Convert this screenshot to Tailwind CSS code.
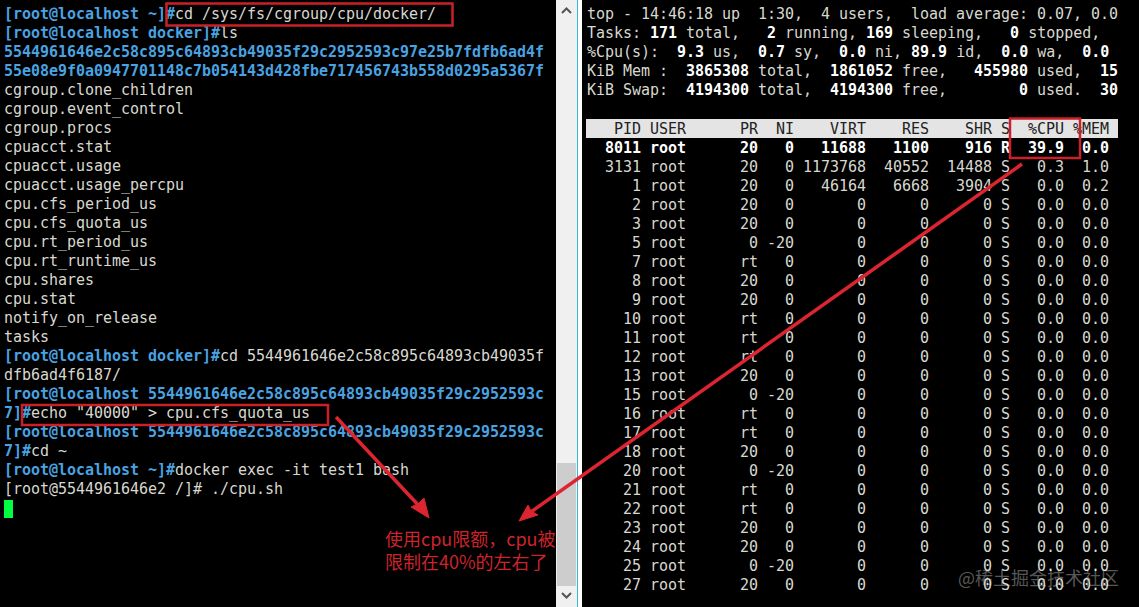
<!doctype html>
<html lang="en">
    <head>
        <meta charset="UTF-8" />
        <title>cpu quota</title>
        <script src="https://cdn.jsdelivr.net/npm/@tailwindcss/browser@4"></script>
    </head>

    <body class="bg-black">
        <div class="relative flex h-[607px] w-[1139px] overflow-hidden bg-black font-['DejaVu_Sans_Mono',monospace] text-[15px] leading-[19px] tracking-[-0.03px] text-[#d8d8d0]">
            <!-- Left terminal -->
            <div class="w-[556px] shrink-0 pl-1 pt-[5px]">
<pre class="font-['DejaVu_Sans_Mono',monospace] text-[15px] leading-[19px]"><b class="text-[#4aa3e0]">[root@localhost ~]#</b>cd /sys/fs/cgroup/cpu/docker/
<b class="text-[#4aa3e0]">[root@localhost docker]#</b>ls
<b class="text-[#4aa3e0]">5544961646e2c58c895c64893cb49035f29c2952593c97e25b7fdfb6ad4f</b>
<b class="text-[#4aa3e0]">55e08e9f0a0947701148c7b054143d428fbe717456743b558d0295a5367f</b>
cgroup.clone_children
cgroup.event_control
cgroup.procs
cpuacct.stat
cpuacct.usage
cpuacct.usage_percpu
cpu.cfs_period_us
cpu.cfs_quota_us
cpu.rt_period_us
cpu.rt_runtime_us
cpu.shares
cpu.stat
notify_on_release
tasks
<b class="text-[#4aa3e0]">[root@localhost docker]#</b>cd 5544961646e2c58c895c64893cb49035f
dfb6ad4f6187/
<b class="text-[#4aa3e0]">[root@localhost 5544961646e2c58c895c64893cb49035f29c2952593c
7]#</b>echo "40000" &gt; cpu.cfs_quota_us
<b class="text-[#4aa3e0]">[root@localhost 5544961646e2c58c895c64893cb49035f29c2952593c
7]#</b>cd ~
<b class="text-[#4aa3e0]">[root@localhost ~]#</b>docker exec -it test1 bash
[root@5544961646e2 /]# ./cpu.sh</pre>
                <div class="mt-px h-[18px] w-[9px] bg-[#00ff40]"></div>
            </div>

            <!-- Scrollbar between the panes -->
            <div class="relative flex w-[26px] shrink-0 bg-white">
                <div class="flex w-[21px] flex-col items-center bg-[#f0f0f0]">
                    <svg class="mt-[7px] h-[7px] w-[11px]" viewBox="0 0 11 7" fill="none" stroke="#555" stroke-width="2"><path d="M1 6l4.500-4.500L10 6" /></svg>
                    <div class="mt-[449px] h-[123px] w-[19px] bg-[#cdcdcd]"></div>
                    <svg class="mt-[6px] h-[7px] w-[11px]" viewBox="0 0 11 7" fill="none" stroke="#555" stroke-width="2"><path d="M1 1l4.500 4.500L10 1" /></svg>
                </div>
                <div class="w-px bg-[#35b5d8]"></div>
            </div>

            <!-- Right terminal (top) -->
            <div class="flex-1 pl-[5px] pt-[5px]">
<pre class="font-['DejaVu_Sans_Mono',monospace] text-[15px] leading-[19px]">top - 14:46:18 up  1:30,  4 users,  load average: 0.07, 0.0
Tasks: <b class="text-white">171</b> total,   <b class="text-white">2</b> running, <b class="text-white">169</b> sleeping,   <b class="text-white">0</b> stopped,
%Cpu(s):  <b class="text-white">9.3</b> us,  <b class="text-white">0.7</b> sy,  <b class="text-white">0.0</b> ni, <b class="text-white">89.9</b> id,  <b class="text-white">0.0</b> wa,  <b class="text-white">0.0</b>
KiB Mem :  <b class="text-white">3865308</b> total,  <b class="text-white">1861052</b> free,   <b class="text-white">455980</b> used,  <b class="text-white">15</b>
KiB Swap:  <b class="text-white">4194300</b> total,  <b class="text-white">4194300</b> free,        <b class="text-white">0</b> used.  <b class="text-white">30</b>
</pre>
                <div class="mt-[19px] -ml-px h-[19px] w-[532px] whitespace-pre bg-[#e4e4e4] pl-px pt-px leading-[18px] text-[#222]">   PID USER      PR  NI    VIRT    RES    SHR S  %CPU %MEM</div>
<pre class="mt-px font-['DejaVu_Sans_Mono',monospace] text-[15px] leading-[19px]"><b class="text-white">  8011 root      20   0   11688   1100    916 R  39.9  0.0</b>
  3131 root      20   0 1173768  40552  14488 S   0.3  1.0
     1 root      20   0   46164   6668   3904 S   0.0  0.2
     2 root      20   0       0      0      0 S   0.0  0.0
     3 root      20   0       0      0      0 S   0.0  0.0
     5 root       0 -20       0      0      0 S   0.0  0.0
     7 root      rt   0       0      0      0 S   0.0  0.0
     8 root      20   0       0      0      0 S   0.0  0.0
     9 root      20   0       0      0      0 S   0.0  0.0
    10 root      rt   0       0      0      0 S   0.0  0.0
    11 root      rt   0       0      0      0 S   0.0  0.0
    12 root      rt   0       0      0      0 S   0.0  0.0
    13 root      20   0       0      0      0 S   0.0  0.0
    15 root       0 -20       0      0      0 S   0.0  0.0
    16 root      rt   0       0      0      0 S   0.0  0.0
    17 root      rt   0       0      0      0 S   0.0  0.0
    18 root      20   0       0      0      0 S   0.0  0.0
    20 root       0 -20       0      0      0 S   0.0  0.0
    21 root      rt   0       0      0      0 S   0.0  0.0
    22 root      rt   0       0      0      0 S   0.0  0.0
    23 root      20   0       0      0      0 S   0.0  0.0
    24 root      20   0       0      0      0 S   0.0  0.0
    25 root       0 -20       0      0      0 S   0.0  0.0
    27 root      20   0       0      0      0 S   0.0  0.0</pre>
            </div>

            <!-- Red annotations over the terminals -->
            <svg class="pointer-events-none absolute left-0 top-0 h-[607px] w-[1139px]" viewBox="0 0 1139 607" fill="none">
                <rect x="166.500" y="3.500" width="286" height="22" stroke="#cc2029" stroke-width="2.500" />
                <rect x="22" y="405" width="306" height="20" stroke="#cc2029" stroke-width="2.500" />
                <rect x="1010" y="118.500" width="70" height="39.500" stroke="#cc2029" stroke-width="2.500" />
                <path d="M336 417L421 508" stroke="#dc2530" stroke-width="3.500" />
                <path d="M429 518L411 507L418 504L424 498Z" fill="#dc2530" stroke="#dc2530" />
                <path d="M1022 164L528 514" stroke="#dc2530" stroke-width="3.500" />
                <path d="M519 521L528 505L531 511L538 515Z" fill="#dc2530" stroke="#dc2530" />
            </svg>
            <div class="absolute left-[385px] top-[527px] font-['Noto_Sans_CJK_SC',sans-serif] text-[18px] leading-[23px] tracking-normal text-[#cc242c]">
                <p>使用cpu限额，cpu被</p>
                <p>限制在40%的左右了</p>
            </div>
            <div class="absolute left-[958px] top-[565px] font-['Noto_Sans_CJK_SC',sans-serif] text-[18px] leading-[24px] tracking-normal text-white/35">@稀土掘金技术社区</div>
        </div>
    </body>
</html>
